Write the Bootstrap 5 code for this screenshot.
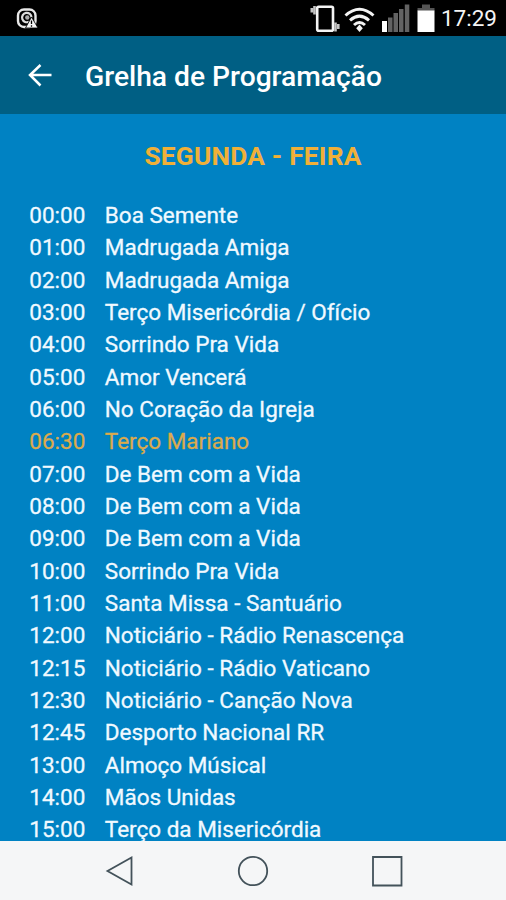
<!DOCTYPE html>
<html lang="pt">
<head>
<meta charset="utf-8">
<meta name="viewport" content="width=device-width, initial-scale=1">
<title>Grelha de Programação</title>
<link href="https://cdn.jsdelivr.net/npm/bootstrap@5.3.0/dist/css/bootstrap.min.css" rel="stylesheet">
<style>
body{font-family:Roboto,"Liberation Sans",sans-serif;background:#0082c3;color:#f0f9ff}
.status-bar{height:36px;background:#000;padding:0 9px 0 15px}
.clock{font-size:22.5px;line-height:36px;color:#f4f4f4;margin-left:5px}
.app-bar{height:78px;background:#005f84;padding:0 28px}
.app-title{font-size:28.2px;font-weight:500;line-height:36px;color:#fff;margin-left:33px;padding-top:4px}
.schedule{background:#0082c3;min-height:0}
.day-title{font-size:26.3px;font-weight:700;line-height:32px;color:#f0b038;margin:26px 0 27px;letter-spacing:.2px}
.slot{height:32.33px;line-height:32.33px;font-size:22.5px;padding-left:29.3px;white-space:nowrap;-webkit-text-stroke:.3px currentColor}
.slot time{width:75.5px}
.slot.current{color:#dcaa4c}
.system-nav{height:59px;background:#f5f6f7;padding:0 101px 0 105px}
svg{display:block}
</style>
</head>
<body>
<div class="d-flex flex-column vh-100 overflow-hidden">
  <div class="status-bar d-flex align-items-center justify-content-between flex-shrink-0">
    <svg width="26" height="36" viewBox="0 0 26 36" fill="none">
      <rect x="3" y="9.5" width="17.5" height="17.5" rx="6" stroke="#e8e8e8" stroke-width="2.4"/>
      <path d="M14 21.7A4.7 4.7 0 1 1 16.5 17.5" stroke="#ddd" stroke-width="2.2"/>
      <circle cx="12.3" cy="17.5" r="2.2" fill="#aaa"/>
      <path d="M16.5 17 23 28H10.5Z" fill="#f4f4f4" stroke="#000" stroke-width=".8"/>
      <path d="M16.5 20.5v3.5M16.5 25.2v1.5" stroke="#000" stroke-width="1.3"/>
    </svg>
    <div class="d-flex align-items-center">
      <svg width="126" height="36" viewBox="310 0 126 36" fill="none">
        <rect x="317.2" y="6.7" width="15.8" height="24" rx="1.5" stroke="#f4f4f4" stroke-width="2.6"/>
        <path d="M314.5 6v8.5M311.8 8v4.500" stroke="#c4c4c4" stroke-width="2.6"/>
        <path d="M335.5 22.500v9M338.3 24v5" stroke="#c4c4c4" stroke-width="2.6"/>
        <g stroke="#f4f4f4" stroke-width="3">
          <path d="M345.5 15.500Q359.500 3 373.500 15.500"/>
          <path d="M350 20.300Q359.500 12 369 20.300"/>
          <path d="M354 25Q359.500 20 365 25"/>
        </g>
        <path d="m359.500 24.500 3.300 3.700-3.300 3.800-3.300-3.800z" fill="#f4f4f4"/>
        <path d="M382 21h5v11h-5z" fill="#fff"/>
        <path d="M388 17.500h4.500V32H388zM393.500 13h4.500v19h-4.500zM399 9h4.500v23H399zM404.800 4.500h4.500V32h-4.500z" fill="#636363"/>
        <path d="M422 4.500h8v3.500h4.500v3h-17V8h4.500z" fill="#555"/>
        <path d="M417.500 10.500h17V32h-17z" fill="#fff"/>
      </svg>
      <span class="clock">17:29</span>
    </div>
  </div>
  <header class="app-bar d-flex align-items-center flex-shrink-0">
    <svg width="24" height="24" viewBox="0 0 24 24" fill="none" stroke="#fff" stroke-width="2.5"><path d="M23.500 12H2M12.500 2l-10.500 10 10.500 10.500"/></svg>
    <h1 class="app-title mb-0">Grelha de Programação</h1>
  </header>
  <main class="schedule flex-fill overflow-hidden">
    <h2 class="day-title text-center">SEGUNDA - FEIRA</h2>
    <ul class="list-unstyled mb-0">
      <li class="slot d-flex"><time>00:00</time><span>Boa Semente</span></li>
      <li class="slot d-flex"><time>01:00</time><span>Madrugada Amiga</span></li>
      <li class="slot d-flex"><time>02:00</time><span>Madrugada Amiga</span></li>
      <li class="slot d-flex"><time>03:00</time><span>Terço Misericórdia / Ofício</span></li>
      <li class="slot d-flex"><time>04:00</time><span>Sorrindo Pra Vida</span></li>
      <li class="slot d-flex"><time>05:00</time><span>Amor Vencerá</span></li>
      <li class="slot d-flex"><time>06:00</time><span>No Coração da Igreja</span></li>
      <li class="slot d-flex current"><time>06:30</time><span>Terço Mariano</span></li>
      <li class="slot d-flex"><time>07:00</time><span>De Bem com a Vida</span></li>
      <li class="slot d-flex"><time>08:00</time><span>De Bem com a Vida</span></li>
      <li class="slot d-flex"><time>09:00</time><span>De Bem com a Vida</span></li>
      <li class="slot d-flex"><time>10:00</time><span>Sorrindo Pra Vida</span></li>
      <li class="slot d-flex"><time>11:00</time><span>Santa Missa - Santuário</span></li>
      <li class="slot d-flex"><time>12:00</time><span>Noticiário - Rádio Renascença</span></li>
      <li class="slot d-flex"><time>12:15</time><span>Noticiário - Rádio Vaticano</span></li>
      <li class="slot d-flex"><time>12:30</time><span>Noticiário - Canção Nova</span></li>
      <li class="slot d-flex"><time>12:45</time><span>Desporto Nacional RR</span></li>
      <li class="slot d-flex"><time>13:00</time><span>Almoço Músical</span></li>
      <li class="slot d-flex"><time>14:00</time><span>Mãos Unidas</span></li>
      <li class="slot d-flex"><time>15:00</time><span>Terço da Misericórdia</span></li>
    </ul>
  </main>
  <nav class="system-nav d-flex align-items-center justify-content-between flex-shrink-0">
    <svg width="30" height="32" viewBox="0 0 30 32" fill="none" stroke="#43525a" stroke-width="1.8"><path d="M26.500 2.500v27L2.500 16z"/></svg>
    <svg width="32" height="32" viewBox="0 0 32 32" fill="none" stroke="#43525a" stroke-width="1.8"><circle cx="16" cy="16" r="14.2"/></svg>
    <svg width="34" height="32" viewBox="0 0 34 32" fill="none" stroke="#43525a" stroke-width="1.8"><path d="M2 2h28.500v28.500H2z"/></svg>
  </nav>
</div>
<script src="https://cdn.jsdelivr.net/npm/bootstrap@5.3.0/dist/js/bootstrap.bundle.min.js"></script>
</body>
</html>
